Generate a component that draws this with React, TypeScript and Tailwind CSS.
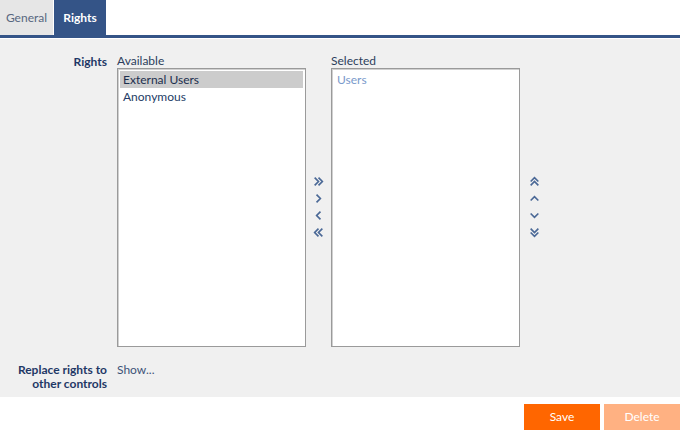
import React from "react";

const font = { fontFamily: 'Lato, "Noto Sans", sans-serif' };

function Chevron({ dir, double }: { dir: "left" | "right" | "up" | "down"; double?: boolean }) {
  const rot = { right: 0, down: 90, left: 180, up: 270 }[dir];
  return (
    <svg width="11" height="11" viewBox="0 0 10 10" className="block">
      <g transform={`rotate(${rot} 5 5)`} fill="none" stroke="#4a6896" strokeWidth="1.5">
        {double ? (
          <>
            <path d="M1.5 1.5 L5 5 L1.5 8.5" />
            <path d="M5 1.5 L8.5 5 L5 8.5" />
          </>
        ) : (
          <path d="M3.2 1.5 L6.7 5 L3.2 8.5" />
        )}
      </g>
    </svg>
  );
}

function ListBox({ title, items, selectedIndex, light }: { title: string; items: string[]; selectedIndex?: number; light?: boolean }) {
  return (
    <div className="flex flex-col">
      <div className="text-[12px] leading-[13px] text-[#2c3e5c] h-[13px] mb-[1px]">{title}</div>
      <div className="w-[189px] h-[279px] bg-white border border-[#9a9a9a] shadow-[inset_1px_1px_0_#d0d0d0] pt-[2px] px-[2px]">
        {items.map((it, i) => (
          <div
            key={it}
            className={`h-[17px] px-[3px] text-[12px] leading-[17px] ${
              i === selectedIndex ? "bg-[#cccccc] text-[#1c2f4e]" : light ? "text-[#7a9acb]" : "text-[#243c66]"
            }`}
          >
            {it}
          </div>
        ))}
      </div>
    </div>
  );
}

export default function App() {
  return (
    <div className="w-[680px] h-[430px] bg-white flex flex-col" style={font}>
      <div className="flex h-[35px] gap-[1px]">
        <div className="w-[53px] bg-[#e6e6e6] text-[#58677f] text-[12px] flex items-center justify-center">General</div>
        <div className="w-[52px] bg-[#345487] text-white font-bold text-[12px] flex items-center justify-center">Rights</div>
      </div>
      <div className="h-[3px] bg-[#345487]" />
      <div className="h-[1px] bg-white" />
      <div className="h-[358px] bg-[#f0f0f0] flex flex-col pt-[15px]">
        <div className="flex">
          <div className="w-[107px] text-right font-bold text-[12px] leading-[13px] text-[#1f3866] pt-[1px]">Rights</div>
          <div className="ml-[10px] flex">
            <ListBox title="Available" items={["External Users", "Anonymous"]} selectedIndex={0} />
            <div className="w-[25px] flex flex-col items-center justify-center gap-[6px] pt-[12px]">
              <Chevron dir="right" double />
              <Chevron dir="right" />
              <Chevron dir="left" />
              <Chevron dir="left" double />
            </div>
            <ListBox title="Selected" items={["Users"]} light />
            <div className="w-[28px] flex flex-col items-center justify-center gap-[6px] pt-[12px]">
              <Chevron dir="up" double />
              <Chevron dir="up" />
              <Chevron dir="down" />
              <Chevron dir="down" double />
            </div>
          </div>
        </div>
        <div className="flex mt-[16px]">
          <div className="w-[107px] text-right font-bold text-[12px] leading-[14px] text-[#1f3866]">
            Replace rights to<br />other controls
          </div>
          <div className="ml-[10px] text-[12px] leading-[14px] text-[#3d5278]">Show...</div>
        </div>
      </div>
      <div className="flex justify-end gap-[4px] mt-[7px]">
        <button className="w-[76px] h-[26px] bg-[#ff6600] text-white text-[12px]">Save</button>
        <button className="w-[76px] h-[26px] bg-[#ffb182] text-white text-[12px]">Delete</button>
      </div>
    </div>
  );
}
